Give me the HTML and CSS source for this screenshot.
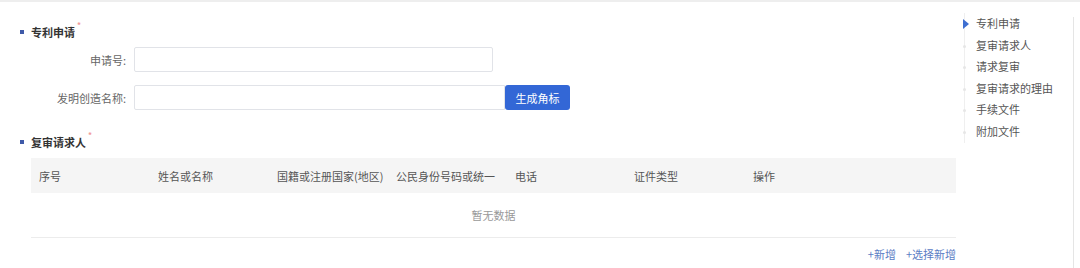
FILE: index.html
```html
<!DOCTYPE html>
<html lang="zh-CN">
<head>
    <meta charset="UTF-8">
    <meta name="viewport" content="width=device-width, initial-scale=1.0">
    <title>复审请求</title>
    <link rel="stylesheet" href="styles.css">
</head>
<body>
    <div class="page">
        <main class="content">
            <section class="block">
                <h2 class="block-title">专利申请<i class="req">*</i></h2>
                <div class="form-row">
                    <label for="app-no">申请号:</label>
                    <input type="text" id="app-no" class="field field-short">
                </div>
                <div class="form-row">
                    <label for="inv-name">发明创造名称:</label>
                    <input type="text" id="inv-name" class="field field-long">
                    <button class="btn-primary">生成角标</button>
                </div>
            </section>

            <section class="block block-second">
                <h2 class="block-title">复审请求人<i class="req">*</i></h2>
                <div class="table">
                    <div class="table-head">
                        <div class="cell">序号</div>
                        <div class="cell">姓名或名称</div>
                        <div class="cell">国籍或注册国家(地区)</div>
                        <div class="cell">公民身份号码或统一</div>
                        <div class="cell">电话</div>
                        <div class="cell">证件类型</div>
                        <div class="cell">操作</div>
                        <div class="cell"></div>
                    </div>
                    <div class="table-empty">暂无数据</div>
                </div>
                <div class="table-actions">
                    <a href="#" class="link">+新增</a>
                    <a href="#" class="link">+选择新增</a>
                </div>
            </section>
        </main>

        <aside class="anchor-nav">
            <ul>
                <li class="active">专利申请</li>
                <li>复审请求人</li>
                <li>请求复审</li>
                <li>复审请求的理由</li>
                <li>手续文件</li>
                <li>附加文件</li>
            </ul>
        </aside>
        <div class="edge"></div>
    </div>
</body>
</html>
```

FILE: styles.css
```css
* {
    box-sizing: border-box;
}
body {
    margin: 0;
    padding: 0;
    background: #fff;
    font-family: "Noto Sans CJK SC", "Noto Sans", sans-serif;
    font-size: 11px;
    color: #606266;
}
.page {
    display: flex;
    height: 268px;
    border-top: 2px solid #eeeeee;
}
.content {
    width: 960px;
    padding: 22px 4px 0 20px;
}
.block-title {
    display: flex;
    align-items: center;
    margin: 0;
    height: 16px;
    line-height: 16px;
    font-size: 11px;
    font-weight: bold;
    color: #333;
}
.block-title::before {
    content: "";
    width: 4px;
    height: 4px;
    margin-right: 7px;
    background: #3f5aa8;
}
.req {
    align-self: flex-start;
    margin-top: -4px;
    margin-left: 2px;
    font-style: normal;
    font-size: 8px;
    line-height: 10px;
    color: #f19a9a;
}
.form-row {
    display: flex;
    align-items: center;
    margin-top: 7px;
    padding-left: 11px;
}
.form-row + .form-row {
    margin-top: 13px;
}
.form-row label {
    width: 95px;
    margin-right: 8px;
    text-align: right;
    color: #666;
}
.field {
    height: 25px;
    border: 1px solid #e1e3e8;
    border-radius: 2px;
    padding: 0 8px;
    font: inherit;
    outline: none;
}
.field-short {
    width: 359px;
}
.field-long {
    width: 371px;
    border-radius: 2px 0 0 2px;
}
.btn-primary {
    width: 65px;
    height: 25px;
    border: none;
    border-radius: 3px;
    background: #3367d6;
    color: #fff;
    font: inherit;
    cursor: pointer;
}
.block-second {
    margin-top: 24px;
}
.table {
    margin: 8px 0 0 11px;
}
.table-head {
    display: grid;
    grid-template-columns: repeat(7, 119px) 1fr;
    height: 35px;
    align-items: center;
    background: #f5f5f5;
    color: #555;
}
.cell {
    padding-left: 8px;
    white-space: nowrap;
    overflow: hidden;
}
.table-empty {
    height: 45px;
    line-height: 44px;
    text-align: center;
    color: #999;
    border-bottom: 1px solid #ececec;
}
.table-actions {
    display: flex;
    justify-content: flex-end;
    gap: 10px;
    margin-top: 8px;
    line-height: 16px;
}
.link {
    color: #5b7cc4;
    text-decoration: none;
}
.anchor-nav {
    width: 113px;
    padding-top: 11px;
}
.anchor-nav ul {
    list-style: none;
    margin: 0 0 0 4px;
    padding: 0;
    border-left: 1px solid #efefef;
}
.anchor-nav li {
    position: relative;
    padding-left: 11px;
    line-height: 21.6px;
    color: #555;
    white-space: nowrap;
}
.anchor-nav li::before {
    content: "";
    position: absolute;
    left: -2px;
    top: 10px;
    width: 3px;
    height: 3px;
    border-radius: 50%;
    background: #e6e6e6;
}
.anchor-nav li.active::before {
    left: -2px;
    top: 6px;
    width: 0;
    height: 0;
    border-radius: 0;
    background: none;
    border-top: 5px solid transparent;
    border-bottom: 5px solid transparent;
    border-left: 6px solid #3f6fd1;
}
.edge {
    width: 1px;
    margin-top: 15px;
    background: #e5e5e5;
}
```
